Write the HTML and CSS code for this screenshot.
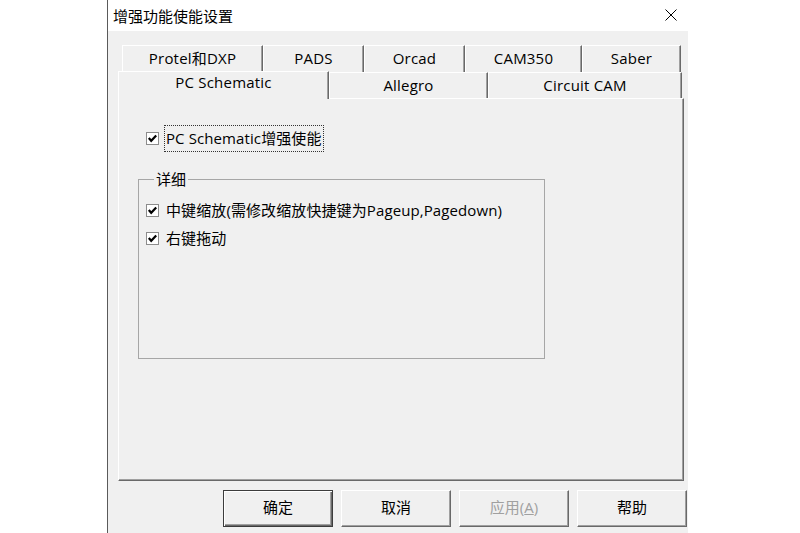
FILE: index.html
```html
<!DOCTYPE html>
<html lang="zh-CN">
<head>
    <meta charset="UTF-8">
    <meta name="viewport" content="width=device-width, initial-scale=1.0">
    <title>增强功能使能设置</title>
    <link rel="stylesheet" href="styles.css">
</head>
<body>
    <div class="dialog">
        <div class="titlebar">
            <span class="title">增强功能使能设置</span>
            <svg class="close" width="12" height="12" viewBox="0 0 12 12">
                <path d="M0.5 0.5 L11.5 11.5 M11.5 0.5 L0.5 11.5" stroke="#000" stroke-width="1" fill="none"/>
            </svg>
        </div>
        <div class="client">
            <div class="tabs">
                <div class="tab-row back">
                    <div class="tab w-protel">Protel和DXP</div>
                    <div class="tab w-pads">PADS</div>
                    <div class="tab w-orcad">Orcad</div>
                    <div class="tab w-cam">CAM350</div>
                    <div class="tab w-saber">Saber</div>
                </div>
                <div class="tab-row front">
                    <div class="tab selected w-pcs">PC Schematic</div>
                    <div class="tab w-allegro">Allegro</div>
                    <div class="tab w-circuit">Circuit CAM</div>
                </div>
                <div class="panel">
                    <div class="check-row main">
                        <svg class="checkbox" width="13" height="13" viewBox="0 0 13 13">
                            <rect x="0.5" y="0.5" width="12" height="12" fill="#fff" stroke="#8c8c8c"/>
                            <path d="M2.8 6 L5.2 8.8 L10.2 3.6" stroke="#000" stroke-width="2.2" fill="none"/>
                        </svg>
                        <span class="label focus">PC Schematic增强使能</span>
                    </div>
                    <fieldset class="group">
                        <legend>详细</legend>
                        <div class="check-row">
                            <svg class="checkbox" width="13" height="13" viewBox="0 0 13 13">
                                <rect x="0.5" y="0.5" width="12" height="12" fill="#fff" stroke="#8c8c8c"/>
                                <path d="M2.8 6 L5.2 8.8 L10.2 3.6" stroke="#000" stroke-width="2.2" fill="none"/>
                            </svg>
                            <span class="label">中键缩放(需修改缩放快捷键为Pageup,Pagedown)</span>
                        </div>
                        <div class="check-row">
                            <svg class="checkbox" width="13" height="13" viewBox="0 0 13 13">
                                <rect x="0.5" y="0.5" width="12" height="12" fill="#fff" stroke="#8c8c8c"/>
                                <path d="M2.8 6 L5.2 8.8 L10.2 3.6" stroke="#000" stroke-width="2.2" fill="none"/>
                            </svg>
                            <span class="label">右键拖动</span>
                        </div>
                    </fieldset>
                </div>
            </div>
            <div class="buttons">
                <button class="btn default">确定</button>
                <button class="btn">取消</button>
                <button class="btn" disabled>应用(<u>A</u>)</button>
                <button class="btn">帮助</button>
            </div>
        </div>
    </div>
</body>
</html>
```

FILE: styles.css
```css
html {
  box-sizing: border-box;
}

*,
*:before,
*:after {
  box-sizing: inherit;
}

body {
  margin: 0;
  background: #fff;
  font-family: "Open Sans", "Noto Sans CJK SC", sans-serif;
  font-size: 15px;
  color: #000;
}

.dialog {
  margin-left: 107px;
  width: 581px;
  height: 533px;
  border-left: 1px solid #5a5a5a;
  display: flex;
  flex-direction: column;
  overflow: hidden;
}

.titlebar {
  height: 31px;
  flex: 0 0 31px;
  background: #fff;
  display: flex;
  align-items: center;
  justify-content: space-between;
  padding: 0 11px 1px 5px;
}

.client {
  flex: 1;
  background: #f0f0f0;
  padding: 14px 0 0 10px;
}

.tabs {
  width: 566px;
}

.tab-row {
  display: flex;
}

.tab-row.back {
  padding-left: 4px;
  height: 27px;
}

.tab-row.front {
  height: 26px;
}

.tab {
  display: flex;
  align-items: center;
  justify-content: center;
  background: #f0f0f0;
  border-top: 1px solid #fff;
  border-left: 1px solid #fff;
  border-right: 1px solid #696969;
  box-shadow: inset -1px 0 #a0a0a0;
  padding-bottom: 3px;
  letter-spacing: 0.2px;
  white-space: nowrap;
}

.tab-row.front .tab {
  padding-bottom: 2px;
}

.tab-row.front .tab.selected {
  position: relative;
  z-index: 1;
  height: 28px;
  margin-top: -1px;
  padding-bottom: 7px;
}

.w-protel { width: 141px; }
.w-pads { width: 101px; }
.w-orcad { width: 101px; }
.w-cam { width: 117px; }
.w-saber { width: 99px; }
.w-pcs { width: 211px; }
.w-allegro { width: 159px; }
.w-circuit { width: 194px; }

.panel {
  height: 383px;
  border-top: 1px solid #fff;
  border-left: 1px solid #fff;
  border-right: 1px solid #696969;
  border-bottom: 1px solid #696969;
  box-shadow: inset -1px -1px #a0a0a0;
  padding: 27px 0 0 27px;
}

.check-row {
  display: flex;
  align-items: center;
  height: 24px;
}

.check-row.main {
  height: 25px;
}

.checkbox {
  flex: 0 0 13px;
  margin-right: 7px;
}

.label {
  white-space: nowrap;
  line-height: 22px;
  letter-spacing: 0.1px;
}

.label.focus {
  outline: 1px dotted #333;
  outline-offset: 0;
  padding: 0 1px;
  margin-left: -1px;
  height: 25px;
  line-height: 24px;
}

.group {
  margin: 18px 0 0 -8px;
  width: 407px;
  border: 1px solid #a6a6a6;
  padding: 9px 0 108px 7px;
  display: flex;
  flex-direction: column;
  gap: 4px;
}

.group legend {
  margin-left: 8px;
  padding: 0 2px;
  line-height: 20px;
}

.buttons {
  display: flex;
  justify-content: flex-end;
  gap: 8px;
  margin-top: 9px;
  padding-right: 1px;
}

.btn {
  width: 110px;
  height: 37px;
  font-family: "Open Sans", "Noto Sans CJK SC", sans-serif;
  font-size: 15px;
  color: #000;
  background: #f0f0f0;
  border: 1px solid;
  border-color: #fff #696969 #696969 #fff;
  box-shadow: inset -1px -1px #a0a0a0;
  padding: 0 0 4px;
}

.btn.default {
  border-color: #3c3c3c;
  box-shadow: inset 1px 1px #fff, inset -1px -1px #696969, inset -2px -2px #a0a0a0;
}

.btn:disabled {
  color: #a0a0a0;
}
```
